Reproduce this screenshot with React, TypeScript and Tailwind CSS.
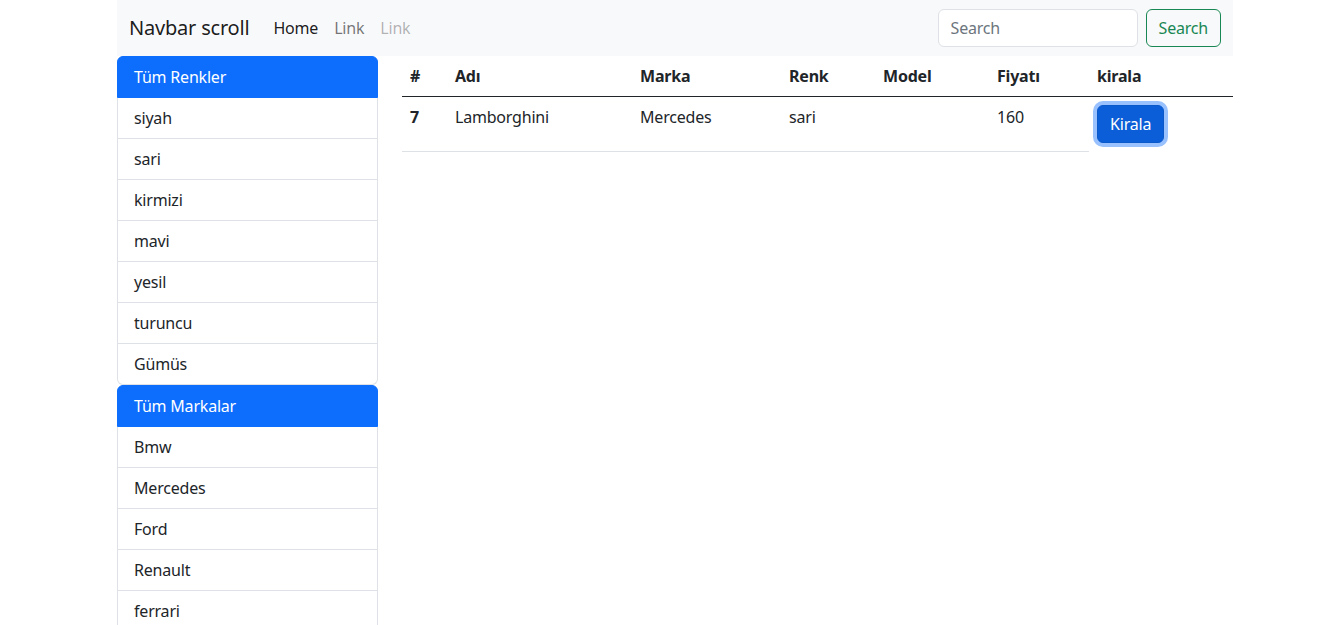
const renkler = ["siyah", "sari", "kirmizi", "mavi", "yesil", "turuncu", "Gümüs"];
const markalar = ["Bmw", "Mercedes", "Ford", "Renault", "ferrari"];

const cars = [
  { id: 7, name: "Lamborghini", brand: "Mercedes", color: "sari", model: "", price: 160 },
];

function ListGroup({ title, items, last }: { title: string; items: string[]; last?: boolean }) {
  return (
    <div className="flex flex-col">
      <div className="rounded-t-[6px] border border-[#0d6efd] bg-[#0d6efd] px-4 py-2 leading-6 text-white">
        {title}
      </div>
      {items.map((item, i) => (
        <div
          key={item}
          className={
            "border border-t-0 border-[#dee2e6] bg-white px-4 py-2 leading-6 text-[#212529] " +
            (i === items.length - 1 && !last ? "rounded-b-[6px]" : "")
          }
        >
          {item}
        </div>
      ))}
    </div>
  );
}

export default function App() {
  return (
    <div className="min-h-[625px] bg-white font-['Noto_Sans','Open_Sans',sans-serif] text-base tracking-[-0.2px] text-[#212529]">
      <div className="ml-[117px] w-[1116px]">
        {/* Navbar */}
        <nav className="flex h-14 items-center bg-[#f8f9fa] px-3">
          <span className="mr-4 text-[20px] leading-[30px] text-black/90">Navbar scroll</span>
          <div className="flex items-center">
            <a className="px-2 leading-6 text-black/90">Home</a>
            <a className="px-2 leading-6 text-black/55">Link</a>
            <a className="px-2 leading-6 text-black/30">Link</a>
          </div>
          <div className="ml-auto flex items-center">
            <input
              placeholder="Search"
              className="mr-2 h-[38px] w-[200px] rounded-[6px] border border-[#dee2e6] bg-white px-3 text-base text-[#212529] outline-none placeholder:text-[#6c757d]"
            />
            <button className="h-[38px] rounded-[6px] border border-[#198754] px-3 leading-6 text-[#198754]">
              Search
            </button>
          </div>
        </nav>

        {/* Content */}
        <div className="flex gap-6">
          <div className="w-[261px] shrink-0">
            <ListGroup title="Tüm Renkler" items={renkler} />
            <ListGroup title="Tüm Markalar" items={markalar} last />
          </div>
          <div className="flex-1">
            <table className="w-full border-collapse text-left">
              <thead>
                <tr className="border-b border-[#212529]">
                  <th className="w-[45px] p-2 leading-6 font-bold">#</th>
                  <th className="w-[185px] p-2 leading-6 font-bold">Adı</th>
                  <th className="w-[149px] p-2 leading-6 font-bold">Marka</th>
                  <th className="w-[94px] p-2 leading-6 font-bold">Renk</th>
                  <th className="w-[114px] p-2 leading-6 font-bold">Model</th>
                  <th className="w-[100px] p-2 leading-6 font-bold">Fiyatı</th>
                  <th className="p-2 leading-6 font-bold">kirala</th>
                </tr>
              </thead>
              <tbody>
                {cars.map((car) => (
                  <tr key={car.id} className="align-top">
                    <td className="border-b border-[#dee2e6] p-2 leading-6 font-bold">{car.id}</td>
                    <td className="border-b border-[#dee2e6] p-2 leading-6">{car.name}</td>
                    <td className="border-b border-[#dee2e6] p-2 leading-6">{car.brand}</td>
                    <td className="border-b border-[#dee2e6] p-2 leading-6">{car.color}</td>
                    <td className="border-b border-[#dee2e6] p-2 leading-6">{car.model}</td>
                    <td className="border-b border-[#dee2e6] p-2 leading-6">{car.price}</td>
                    <td className="p-2">
                      <button className="h-[38px] rounded-[6px] border border-[#0a58ca] bg-[#0b5ed7] px-3 leading-6 text-white shadow-[0_0_0_4px_rgba(49,132,253,0.5)]">
                        Kirala
                      </button>
                    </td>
                  </tr>
                ))}
              </tbody>
            </table>
          </div>
        </div>
      </div>
    </div>
  );
}
